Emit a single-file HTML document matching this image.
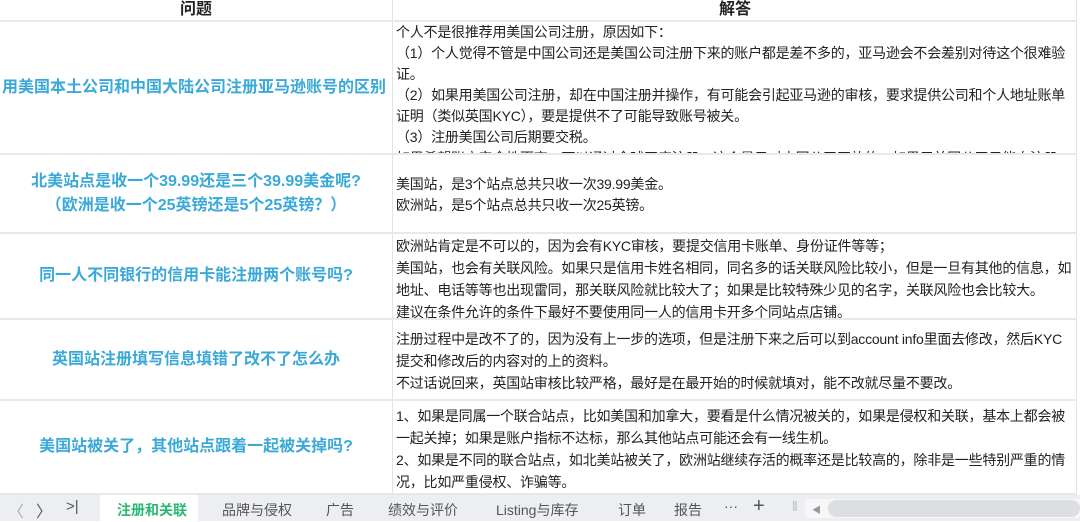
<!DOCTYPE html>
<html><head><meta charset="utf-8"><style>
*{margin:0;padding:0;box-sizing:border-box}
body{width:1080px;height:521px;overflow:hidden;background:#fff;font-family:"Liberation Sans","Noto Sans CJK SC",sans-serif;position:relative}
.h{position:absolute;top:0;height:20px;font-weight:bold;font-size:16px;color:#222;text-align:center;line-height:20px}
.vl{position:absolute;left:392px;top:0;width:1px;height:495px;background:#dfe3ea}
.vr{position:absolute;left:1076px;top:0;width:1px;height:495px;background:#dfe3ea}
.hl{position:absolute;left:0;width:1077px;height:2px;background:#e6e9ef}
.q{position:absolute;left:0;width:392px;display:flex;align-items:center;justify-content:center;text-align:center;color:#3ba9d8;font-weight:bold;font-size:16px;line-height:24px;overflow:hidden;white-space:nowrap}
.a{position:absolute;left:396px;width:679px;font-size:14px;line-height:21px;color:#222;overflow:hidden;letter-spacing:-0.22px}
.tabs{position:absolute;left:0;top:495px;width:1080px;height:26px;background:#eceef1;font-size:14px;color:#555}
.tabs span{position:absolute;top:5px}
</style></head><body>
<div class="h" style="left:0;width:392px">问题</div>
<div class="h" style="left:393px;width:684px">解答</div>
<div class="vl"></div><div class="vr"></div>
<div class="hl" style="top:20px"></div>
<div class="hl" style="top:153px"></div>
<div class="hl" style="top:232px"></div>
<div class="hl" style="top:318px"></div>
<div class="hl" style="top:399px"></div>
<div class="hl" style="top:493px"></div>

<div class="q" style="top:22px;height:131px;justify-content:flex-start;padding-left:2px">用美国本土公司和中国大陆公司注册亚马逊账号的区别</div>
<div class="a" style="top:22px;height:131px">个人不是很推荐用美国公司注册，原因如下：<br>（1）个人觉得不管是中国公司还是美国公司注册下来的账户都是差不多的，亚马逊会不会差别对待这个很难验证。<br>（2）如果用美国公司注册，却在中国注册并操作，有可能会引起亚马逊的审核，要求提供公司和个人地址账单证明（类似英国KYC），要是提供不了可能导致账号被关。<br>（3）注册美国公司后期要交税。<br>如果希望账户安全性更高，可以通过全球开店注册，这个是只对中国公司开放的，如果用美国公司只能自注册</div>

<div class="q" style="top:155px;height:77px;white-space:normal">北美站点是收一个39.99还是三个39.99美金呢?<br>（欧洲是收一个25英镑还是5个25英镑？）</div>
<div class="a" style="top:174px">美国站，是3个站点总共只收一次39.99美金。<br>欧洲站，是5个站点总共只收一次25英镑。</div>

<div class="q" style="top:234px;height:84px">同一人不同银行的信用卡能注册两个账号吗?</div>
<div class="a" style="top:235px;line-height:22px">欧洲站肯定是不可以的，因为会有KYC审核，要提交信用卡账单、身份证件等等；<br>美国站，也会有关联风险。如果只是信用卡姓名相同，同名多的话关联风险比较小，但是一旦有其他的信息，如地址、电话等等也出现雷同，那关联风险就比较大了；如果是比较特殊少见的名字，关联风险也会比较大。<br>建议在条件允许的条件下最好不要使用同一人的信用卡开多个同站点店铺。</div>

<div class="q" style="top:320px;height:79px">英国站注册填写信息填错了改不了怎么办</div>
<div class="a" style="top:328px;line-height:22px">注册过程中是改不了的，因为没有上一步的选项，但是注册下来之后可以到account info里面去修改，然后KYC提交和修改后的内容对的上的资料。<br>不过话说回来，英国站审核比较严格，最好是在最开始的时候就填对，能不改就尽量不要改。</div>

<div class="q" style="top:401px;height:92px">美国站被关了，其他站点跟着一起被关掉吗?</div>
<div class="a" style="top:405px;line-height:22px;height:88px">1、如果是同属一个联合站点，比如美国和加拿大，要看是什么情况被关的，如果是侵权和关联，基本上都会被一起关掉；如果是账户指标不达标，那么其他站点可能还会有一线生机。<br>2、如果是不同的联合站点，如北美站被关了，欧洲站继续存活的概率还是比较高的，除非是一些特别严重的情况，比如严重侵权、诈骗等。</div>

<div class="tabs">
<span style="left:8px;color:#aaa;font-size:16px;top:3px">〈</span>
<span style="left:36px;font-size:16px;top:3px">〉</span>
<span style="left:66px;font-size:15px;top:3px">&gt;|</span>
<div style="position:absolute;left:100px;top:0;width:98px;height:26px;background:#fff"></div>
<span style="left:117px;color:#2bb673;font-weight:bold">注册和关联</span>
<span style="left:222px">品牌与侵权</span>
<span style="left:326px">广告</span>
<span style="left:388px">绩效与评价</span>
<span style="left:496px">Listing与库存</span>
<span style="left:618px">订单</span>
<span style="left:674px">报告</span>
<span style="left:724px;top:3px">···</span>
<span style="left:753px;font-size:20px;top:0">+</span>
<span style="left:792px;color:#bbb;top:3px">‖</span>
<div style="position:absolute;left:805px;top:4px;width:275px;height:19px;background:#f7f7f8;border-radius:3px"></div>
<span style="left:812px;font-size:9px;top:8px;color:#999">◀</span>
<div style="position:absolute;left:828px;top:5px;width:252px;height:17px;background:#dcdee2;border-radius:9px"></div>
</div>
</body></html>
